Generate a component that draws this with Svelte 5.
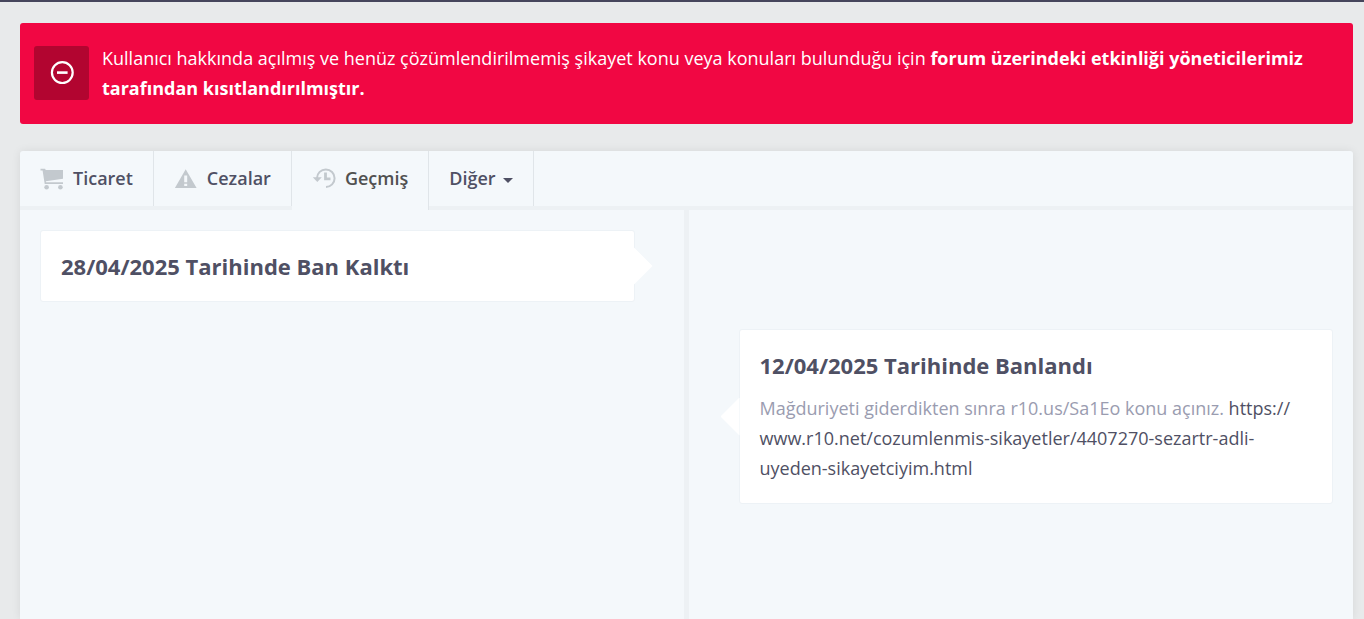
<script>
	let aktifSekme = $state('gecmis');

	const sekmeler = [
		{ id: 'ticaret', baslik: 'Ticaret' },
		{ id: 'cezalar', baslik: 'Cezalar' },
		{ id: 'gecmis', baslik: 'Geçmiş' }
	];

	const olaylar = [
		{ tarih: '28/04/2025', baslik: 'Tarihinde Ban Kalktı', yon: 'sol' },
		{
			tarih: '12/04/2025',
			baslik: 'Tarihinde Banlandı',
			yon: 'sag',
			aciklama: 'Mağduriyeti giderdikten sınra r10.us/Sa1Eo konu açınız.',
			adres: 'www.r10.net/cozumlenmis-sikayetler/4407270-sezartr-adli-uyeden-sikayetciyim.html'
		}
	];
</script>

<main>
	<div class="alert" role="alert">
		<div class="alert-icon">
			<svg width="24" height="24" viewBox="0 0 24 24" fill="none" stroke="#fff">
				<circle cx="12.3" cy="11.6" r="10.4" stroke-width="2.2" />
				<path d="M7 11.6h10.6" stroke-width="2.6" />
			</svg>
		</div>
		<p>
			Kullanıcı hakkında açılmış ve henüz çözümlendirilmemiş şikayet konu veya konuları bulunduğu için
			<strong>forum üzerindeki etkinliği yöneticilerimiz tarafından kısıtlandırılmıştır.</strong>
		</p>
	</div>

	<section class="panel">
		<nav class="tabs">
			{#each sekmeler as sekme}
				<button class="tab" class:active={aktifSekme === sekme.id} onclick={() => (aktifSekme = sekme.id)}>
					{#if sekme.id === 'ticaret'}
						<svg width="24" height="24" viewBox="0 0 24 24" fill="#c3c9ce">
							<path d="M.5 2.8h4.6l.6 1.2H23v8.7L5.8 15.2l.3 1.1H23v1.6H4.7L2.6 4.5H.5z" />
							<circle cx="6.6" cy="21.3" r="2.3" />
							<circle cx="20.4" cy="21.3" r="2.3" />
						</svg>
					{:else if sekme.id === 'cezalar'}
						<svg width="24" height="24" viewBox="0 0 24 24" fill="#c3c9ce">
							<path
								fill-rule="evenodd"
								d="M11.7 3.2 22.6 22H.9zM10.2 9.4v6.9h3V9.4zM10.2 17.7v2.3h3v-2.3z"
							/>
						</svg>
					{:else}
						<svg width="24" height="24" viewBox="0 0 24 24" fill="none" stroke="#c3c9ce">
							<path d="M5 12A8.8 8.8 0 1 1 14 21" stroke-width="2" />
							<path d="M.8 11.2h9L5.3 16z" fill="#c3c9ce" stroke="none" />
							<path d="M13.5 6.6v6.2h5" stroke-width="2.8" />
						</svg>
					{/if}
					{sekme.baslik}
				</button>
			{/each}
			<button class="tab more" aria-haspopup="true">
				Diğer
				<span class="caret"></span>
			</button>
		</nav>

		<div class="timeline">
			{#each olaylar as olay}
				<div class="row {olay.yon}">
					<article class="card">
						<h2>{olay.tarih} {olay.baslik}</h2>
						{#if olay.aciklama}
							<p>{olay.aciklama} <a href="https://{olay.adres}">https://<wbr />{olay.adres}</a></p>
						{/if}
					</article>
				</div>
			{/each}
		</div>
	</section>
</main>

<style>
	:global(body) {
		background: #e8eaeb;
	}

	main {
		box-sizing: border-box;
		min-height: 100vh;
		display: flex;
		flex-direction: column;
		gap: 27px;
		padding: 21px 11px 0 20px;
		border-top: 2px solid #46465c;
		font-family: 'Open Sans', sans-serif;
		font-size: 18px;
		line-height: 30px;
		color: #4f5064;
	}

	h2,
	p {
		margin: 0;
	}

	.alert {
		display: flex;
		align-items: center;
		gap: 13px;
		padding: 20px 14px 21px;
		border-radius: 3px;
		background: #f10743;
		color: #fff;
	}

	.alert p {
		flex: 1;
		padding-right: 20px;
	}

	.alert-icon {
		display: flex;
		align-items: center;
		justify-content: center;
		width: 55px;
		height: 54px;
		border-radius: 3px;
		background: #b20530;
	}

	.panel {
		flex: 1;
		display: flex;
		flex-direction: column;
		border-radius: 3px 3px 0 0;
		background: #f4f8fb;
		box-shadow: 0 0 10px rgba(0, 0, 0, 0.08);
	}

	.tabs {
		display: flex;
		box-shadow: inset 0 -4px #edf1f4;
	}

	.tab {
		display: flex;
		align-items: center;
		gap: 9px;
		padding: 0 20px 1px;
		height: 55px;
		margin-bottom: 4px;
		border: 0;
		border-right: 1px solid #e0e5e9;
		background: none;
		font: inherit;
		font-weight: 600;
		color: #4f5064;
		cursor: pointer;
	}

	.tab.active {
		height: 59px;
		margin-bottom: 0;
		padding-bottom: 5px;
		background: #f4f8fb;
		color: #505050;
	}

	.more {
		gap: 7px;
	}

	.caret {
		border: 5px solid transparent;
		border-top-color: #4f5064;
		border-bottom: 0;
		margin-top: 4px;
	}

	.timeline {
		flex: 1;
		display: flex;
		flex-direction: column;
		gap: 27px;
		padding: 20px;
		background: linear-gradient(#edf1f4, #edf1f4) center / 5px 100% no-repeat;
	}

	.row {
		display: flex;
	}

	.row.sag {
		justify-content: flex-end;
	}

	.card {
		position: relative;
		box-sizing: border-box;
		width: calc(50% - 52px);
		padding: 20px;
		border: 1px solid #edf2f6;
		border-radius: 3px;
		background: #fff;
	}

	.card::after {
		content: '';
		position: absolute;
		top: calc(50% - 19px);
		left: 100%;
		width: 19px;
		height: 38px;
		background: #fff;
		clip-path: polygon(0 0, 100% 50%, 0 100%);
	}

	.sag .card::after {
		left: auto;
		right: 100%;
		clip-path: polygon(100% 0, 0 50%, 100% 100%);
	}

	h2 {
		font-size: 22px;
		line-height: 30px;
		font-weight: 700;
	}

	.card p {
		margin-top: 13px;
		color: #9a9cb0;
	}

	.card a {
		color: #4f5064;
		text-decoration: none;
	}
</style>
